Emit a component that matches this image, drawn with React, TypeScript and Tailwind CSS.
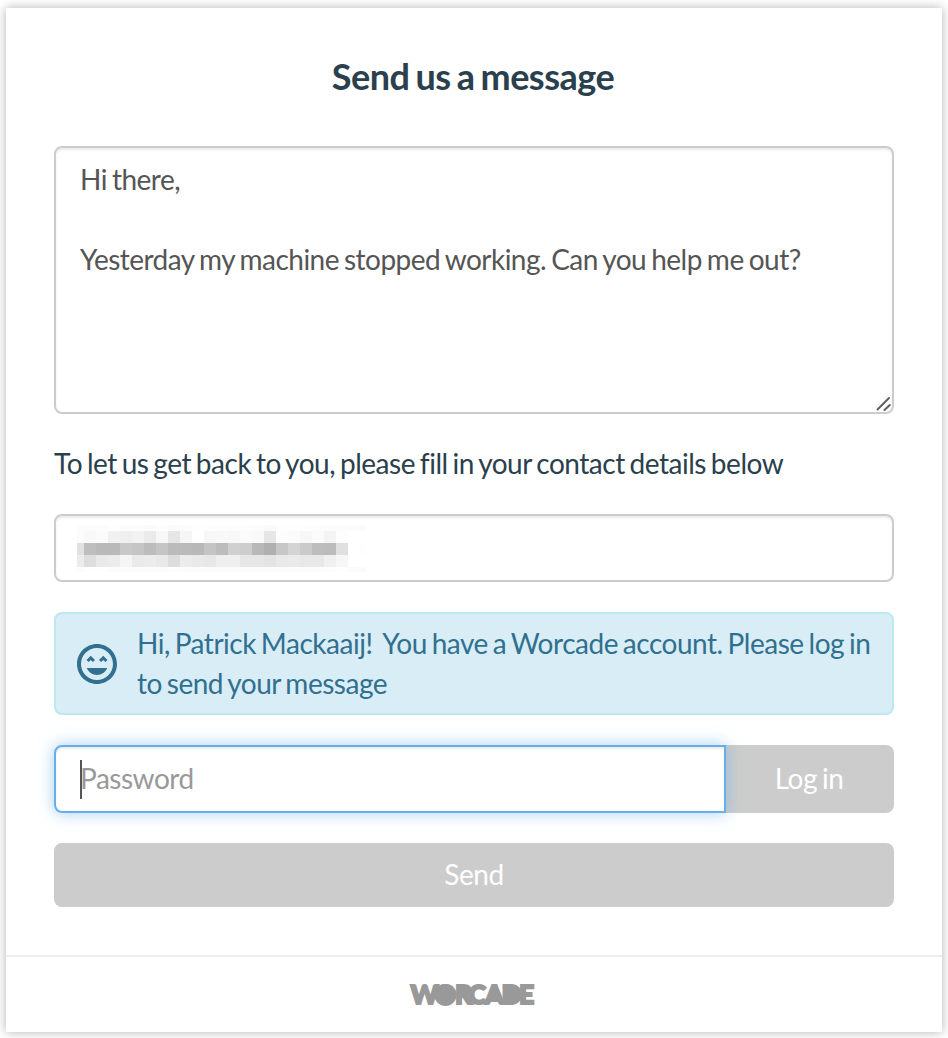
import React from 'react';
import { MdOutlineSentimentVerySatisfied } from 'react-icons/md';

const columns = '7px repeat(23, 12px) 6px';
const rows = '6px 12px 12px 12px 5px';

const mosaic: number[][] = [
  [252, 252, 252, 254, 252, 252, 251, 253, 251, 252, 254, 253, 253, 253, 253, 252, 250, 254, 254, 253, 253, 252, 252, 252, 252],
  [252, 249, 251, 241, 239, 242, 234, 247, 230, 246, 255, 247, 249, 248, 251, 249, 230, 253, 251, 247, 251, 244, 253, 255, 255],
  [225, 190, 185, 185, 200, 197, 188, 197, 187, 186, 184, 196, 188, 208, 205, 184, 176, 199, 212, 202, 189, 188, 224, 255, 254],
  [236, 221, 233, 235, 245, 234, 236, 233, 221, 236, 233, 231, 239, 239, 230, 230, 228, 233, 234, 232, 232, 240, 247, 255, 255],
  [252, 254, 254, 252, 252, 252, 251, 252, 253, 252, 252, 252, 252, 252, 252, 252, 252, 252, 252, 252, 252, 253, 254, 251, 251],
];

function BlurredEmail() {
  return (
    <div className="grid" style={{ gridTemplateColumns: columns, gridTemplateRows: rows }}>
      {mosaic.flatMap((row, r) =>
        row.map((v, c) => <span key={`${r}-${c}`} style={{ backgroundColor: `rgb(${v},${v},${v})` }} />),
      )}
    </div>
  );
}

function Logo() {
  return (
    <svg
      className="overflow-visible font-['Lato',sans-serif] text-[26.5px] font-black tracking-normal"
      width="124"
      height="22"
      viewBox="0 0 124 22"
      fill="#999"
      stroke="#999"
      strokeWidth="2"
    >
      <text y="20.2" x="0.5 24.5 45 58.5 75 91.5 109">WORCADE</text>
      <circle cx="35.5" cy="11" r="11" stroke="none" />
      <path d="M48 4h7a3.5 3.5 0 0 1 0 8h-7zM80 17l5-11 5 11zM95 4h5a7.5 7.5 0 0 1 0 15h-5z" />
    </svg>
  );
}

export default function App() {
  return (
    <div className="h-[1038px] w-[948px] overflow-hidden bg-white pl-[6px] pt-2 font-['Lato',sans-serif] text-[28px] leading-10 tracking-[-0.48px] [word-spacing:-1.8px]">
      <main className="flex h-[1024px] w-[936px] flex-col bg-white shadow-[0_0_10px_rgba(0,0,0,0.3)]">
        <div className="flex h-[947px] flex-col px-12">
          <h1 className="mt-11 pr-[2px] text-center text-[36px] font-bold leading-[48px] tracking-[-0.5px] text-[#2a404c] [word-spacing:-2.2px]">
            Send us a message
          </h1>
          <div className="relative mt-[46px] h-[268px]">
            <textarea
              className="block h-full w-full resize-none rounded-lg border-2 border-[#ccc] bg-white px-6 pb-3 pt-[11px] tracking-[-0.52px] text-[#555] shadow-[inset_0_2px_2px_rgba(0,0,0,0.075)] outline-none [word-spacing:-1.6px]"
              defaultValue={'Hi there,\n\nYesterday my machine stopped working. Can you help me out?'}
            />
            <svg className="absolute bottom-[3px] right-[3px]" width="15" height="15" viewBox="0 0 15 15" fill="none" stroke="#606060" strokeWidth="2" strokeLinecap="round">
              <path d="M1.5 13.5 13 2M8.5 14 13.8 9" />
            </svg>
          </div>
          <p className="mt-[29px] text-[#2a404c]">To let us get back to you, please fill in your contact details below</p>
          <div className="mt-[31px] h-[68px] rounded-lg border-2 border-[#ccc] pl-[21px] pt-[9px] shadow-[inset_0_2px_2px_rgba(0,0,0,0.075)]">
            <BlurredEmail />
          </div>
          <div className="mt-[30px] flex h-[103px] items-center rounded-lg border-2 border-[#bce8f1] bg-[#d9edf7] pl-[17px] text-[#31708f]">
            <MdOutlineSentimentVerySatisfied className="size-12 shrink-0" />
            <p className="ml-4 whitespace-nowrap pb-px">
              Hi, Patrick Mackaaij! <span className="ml-[5px]">You have a Worcade account. Please log in</span>
              <br />
              to send your message
            </p>
          </div>
          <div className="mt-[30px] flex h-[68px]">
            <div className="relative z-10 w-[672px]">
              <input
                className="h-full w-full rounded-l-lg border-2 border-[#66afe9] bg-white px-6 pb-[2px] text-[#555] shadow-[inset_0_2px_2px_rgba(0,0,0,0.075),0_0_16px_rgba(102,175,233,0.6)] outline-none placeholder:text-[#999]"
                type="password"
                placeholder="Password"
              />
              <span className="absolute left-[26px] top-[15px] h-[39px] w-[2px] bg-[#555]" />
            </div>
            <button className="w-[168px] rounded-r-lg bg-[#ccc] pb-[2px] pr-[2px] text-white [word-spacing:-1.8px]">Log in</button>
          </div>
          <button className="mt-[30px] h-16 rounded-lg bg-[#ccc] pb-[2px] text-white">Send</button>
        </div>
        <footer className="flex h-[77px] items-center justify-center border-t-2 border-[#eee] pr-1">
          <Logo />
        </footer>
      </main>
    </div>
  );
}
